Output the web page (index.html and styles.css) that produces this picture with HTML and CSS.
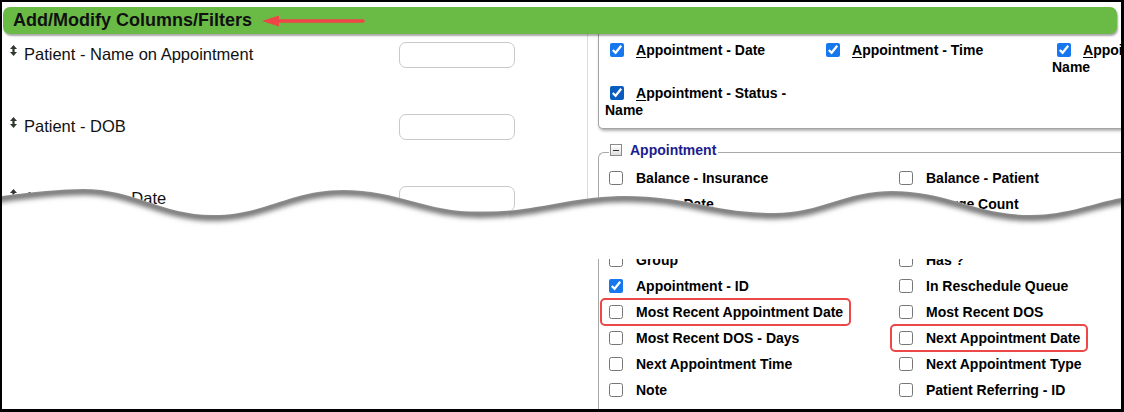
FILE: index.html
```html
<!DOCTYPE html>
<html lang="en">
<head>
<meta charset="utf-8">
<title>Add/Modify Columns/Filters</title>
<link rel="stylesheet" href="styles.css">
</head>
<body>
<div class="frame">
  <header class="titlebar">
    <h1 class="title">Add/Modify Columns/Filters</h1>
    <svg class="callout-arrow" width="104" height="14" viewBox="0 0 104 14" aria-hidden="true">
      <line x1="13" y1="7" x2="101" y2="7" stroke="#ee4646" stroke-width="3.5" stroke-linecap="round"/>
      <polygon points="0,7 17,1.5 17,12.5" fill="#ee4646"/>
    </svg>
  </header>

  <section class="upper">
    <div class="filters">
      <div class="filter-row">
        <svg class="sort-icon" width="7" height="11" viewBox="0 0 7 11" aria-hidden="true"><path d="M3.5 0 L7 4 H4.6 V7 H7 L3.5 11 L0 7 H2.4 V4 H0 Z"/></svg>
        <span class="filter-label">Patient - Name on Appointment</span>
        <input class="filter-input" type="text">
      </div>
      <div class="filter-row">
        <svg class="sort-icon" width="7" height="11" viewBox="0 0 7 11" aria-hidden="true"><path d="M3.5 0 L7 4 H4.6 V7 H7 L3.5 11 L0 7 H2.4 V4 H0 Z"/></svg>
        <span class="filter-label">Patient - DOB</span>
        <input class="filter-input" type="text">
      </div>
      <div class="filter-row">
        <svg class="sort-icon" width="7" height="11" viewBox="0 0 7 11" aria-hidden="true"><path d="M3.5 0 L7 4 H4.6 V7 H7 L3.5 11 L0 7 H2.4 V4 H0 Z"/></svg>
        <span class="filter-label">Appointment - Date</span>
        <input class="filter-input" type="text">
      </div>
    </div>

    <div class="columns">
      <div class="selected-box">
        <div class="sel-item"><input type="checkbox" checked><span><u>A</u>ppointment - Date</span></div>
        <div class="sel-item"><input type="checkbox" checked><span><u>A</u>ppointment - Time</span></div>
        <div class="sel-item"><input type="checkbox" checked><span><u>A</u>ppointment - Provider Name</span></div>
        <div class="sel-item"><input class="focused" type="checkbox" checked><span><u>A</u>ppointment - Status - Name</span></div>
      </div>

      <div class="group">
        <div class="legend"><span class="toggle"></span><span>Appointment</span></div>
        <div class="opt-grid">
          <label class="opt"><input type="checkbox"><span>Balance - Insurance</span></label>
          <label class="opt"><input type="checkbox"><span>Balance - Patient</span></label>
          <label class="opt"><input type="checkbox"><span>Create Date</span></label>
          <label class="opt"><input type="checkbox"><span>Charge Count</span></label>
          <label class="opt"><input type="checkbox"><span>Check In Time</span></label>
          <label class="opt"><input type="checkbox"><span>Check Out Time</span></label>
        </div>
      </div>
    </div>
  </section>

  <section class="lower">
    <div class="lower-spacer"></div>
    <div class="lower-group">
      <div class="opt-grid shifted">
        <label class="opt"><input type="checkbox"><span>Group</span></label>
        <label class="opt"><input type="checkbox"><span>Has ?</span></label>
        <label class="opt"><input type="checkbox" checked><span>Appointment - ID</span></label>
        <label class="opt"><input type="checkbox"><span>In Reschedule Queue</span></label>
        <label class="opt highlight"><input type="checkbox"><span>Most Recent Appointment Date</span></label>
        <label class="opt"><input type="checkbox"><span>Most Recent DOS</span></label>
        <label class="opt"><input type="checkbox"><span>Most Recent DOS - Days</span></label>
        <label class="opt highlight"><input type="checkbox"><span>Next Appointment Date</span></label>
        <label class="opt"><input type="checkbox"><span>Next Appointment Time</span></label>
        <label class="opt"><input type="checkbox"><span>Next Appointment Type</span></label>
        <label class="opt"><input type="checkbox"><span>Note</span></label>
        <label class="opt"><input type="checkbox"><span>Patient Referring - ID</span></label>
        <label class="opt"><input type="checkbox"><span>Patient Referring - Name</span></label>
        <label class="opt"><input type="checkbox"><span>Provider - Name</span></label>
      </div>
    </div>
  </section>

  <svg class="tear" width="1119" height="89" viewBox="0 0 1119 89" aria-hidden="true">
    <defs>
      <clipPath id="below">
        <path d="M-5,27 L0,26 C30,22 60,19 81,19 C133,19 159,45 211,45 C263,45 289,20 341,20 C396,20 423,42 478,42 C537,42 566,26 625,26 C684,26 713,43 772,43 C819,43 843,21 890,21 C946,21 973,45 1029,45 C1065,45 1095,32 1119,28 L1125,27 L1125,95 L-5,95 Z"/>
      </clipPath>
      <filter id="soft" x="-20" y="-20" width="1200" height="140" filterUnits="userSpaceOnUse">
        <feGaussianBlur stdDeviation="2.8"/>
      </filter>
    </defs>
    <path fill="#ffffff" d="M-5,27 L0,26 C30,22 60,19 81,19 C133,19 159,45 211,45 C263,45 289,20 341,20 C396,20 423,42 478,42 C537,42 566,26 625,26 C684,26 713,43 772,43 C819,43 843,21 890,21 C946,21 973,45 1029,45 C1065,45 1095,32 1119,28 L1125,27 L1125,95 L-5,95 Z"/>
    <g clip-path="url(#below)">
      <path filter="url(#soft)" transform="translate(0,2)" fill="none" stroke="#767676" stroke-width="8" d="M-5,27 L0,26 C30,22 60,19 81,19 C133,19 159,45 211,45 C263,45 289,20 341,20 C396,20 423,42 478,42 C537,42 566,26 625,26 C684,26 713,43 772,43 C819,43 843,21 890,21 C946,21 973,45 1029,45 C1065,45 1095,32 1119,28 L1125,27"/>
    </g>
  </svg>
</div>
</body>
</html>
```

FILE: styles.css
```css
html, body {
  margin: 0;
  padding: 0;
  background: #ffffff;
}

.frame {
  position: relative;
  width: 1124px;
  height: 412px;
  box-sizing: border-box;
  border-style: solid;
  border-color: #000000;
  border-width: 2px 3px 3px 2px;
  overflow: hidden;
  display: flex;
  flex-direction: column;
  background: #ffffff;
  font-family: "Liberation Sans", Arial, sans-serif;
}

/* ---------- title bar ---------- */
.titlebar {
  position: relative;
  z-index: 1;
  flex: 0 0 27px;
  margin: 5px 4px 0 1px;
  padding-left: 10px;
  display: flex;
  align-items: center;
  background: #6abb46;
  border-radius: 7px;
  box-shadow: 1px 2px 2px rgba(0, 0, 0, 0.35);
}

.title {
  margin: 0;
  font-size: 18px;
  font-weight: bold;
  line-height: 27px;
  color: #111111;
}

.callout-arrow {
  display: block;
  margin-left: 10px;
}

/* ---------- upper part ---------- */
.upper {
  flex: 0 0 225px;
  display: flex;
  overflow: hidden;
}

.filters {
  width: 577px;
  flex-shrink: 0;
  padding-left: 8px;
  border-right: 1px solid #dcdcdc;
}

.filter-row {
  display: flex;
  align-items: flex-start;
  height: 72px;
}

.sort-icon {
  flex-shrink: 0;
  margin: 11px 7px 0 0;
  fill: #2f3a2f;
}

.filter-label {
  width: 375px;
  flex-shrink: 0;
  margin-top: 10px;
  font-size: 16.5px;
  line-height: 20px;
  color: #111111;
}

.filter-input {
  width: 116px;
  height: 26px;
  box-sizing: border-box;
  margin: 8px 0 0 0;
  border: 1px solid #c9c9c9;
  border-radius: 7px;
  background: #ffffff;
}

.columns {
  flex: 1;
  min-width: 0;
}

.selected-box {
  margin-left: 10px;
  padding: 8px 0 9px 6px;
  display: grid;
  grid-template-columns: 216px 231px 200px;
  row-gap: 9px;
  background: #ffffff;
  border-left: 1px solid #a4a4a4;
  border-bottom: 1px solid #a4a4a4;
  border-bottom-left-radius: 5px;
  box-shadow: 1px 2px 3px rgba(0, 0, 0, 0.3);
}

.sel-item {
  font-size: 14px;
  font-weight: bold;
  line-height: 17px;
  color: #000000;
}

.sel-item input {
  width: 14px;
  height: 14px;
  margin: 0 12px 0 5px;
  vertical-align: -2px;
  accent-color: #1677ee;
}

.sel-item .focused {
  accent-color: #0b5cbf;
}

.sel-item u {
  text-decoration-thickness: 1px;
  text-underline-offset: 2px;
}

.group {
  margin: 23px 0 0 10px;
  padding-left: 10px;
  border-top: 1px solid #a8a8a8;
  border-left: 1px solid #a8a8a8;
  border-top-left-radius: 6px;
}

.legend {
  display: flex;
  align-items: center;
  gap: 8px;
  width: max-content;
  height: 16px;
  margin-top: -11px;
  padding: 0 2px 0 1px;
  background: #ffffff;
  font-size: 14px;
  font-weight: bold;
  line-height: 16px;
  color: #1c1c8e;
}

.toggle {
  width: 12px;
  height: 12px;
  box-sizing: border-box;
  border: 1px solid #8a8a8a;
  background: linear-gradient(#ffffff, #dedede);
  display: flex;
  align-items: center;
  justify-content: center;
}

.toggle::before {
  content: "";
  width: 6px;
  height: 1px;
  background: #333333;
}

.opt-grid {
  display: grid;
  grid-template-columns: 290px 290px;
  grid-auto-rows: 26px;
  margin-top: 7px;
}

.opt {
  position: relative;
  justify-self: start;
  display: flex;
  align-items: center;
  gap: 13px;
  font-size: 14px;
  font-weight: bold;
  line-height: 16px;
  color: #000000;
  white-space: nowrap;
}

.opt input {
  width: 14px;
  height: 14px;
  margin: 0;
  flex-shrink: 0;
  accent-color: #1677ee;
}

.opt.highlight::after {
  content: "";
  position: absolute;
  top: -1px;
  bottom: -1px;
  left: -9px;
  right: -8px;
  border: 2px solid #ec4848;
  border-radius: 5px;
  pointer-events: none;
}

/* ---------- lower part ---------- */
.lower {
  flex: 1;
  display: flex;
  overflow: hidden;
}

.lower-spacer {
  width: 586px;
  flex-shrink: 0;
}

.lower-group {
  flex: 1;
  margin-left: 10px;
  padding-left: 10px;
  border-left: 1px solid #a8a8a8;
}

.opt-grid.shifted {
  margin-top: -12px;
}

/* ---------- torn-page break ---------- */
.tear {
  position: absolute;
  z-index: 2;
  left: 0;
  top: 168px;
  display: block;
  pointer-events: none;
}
```
